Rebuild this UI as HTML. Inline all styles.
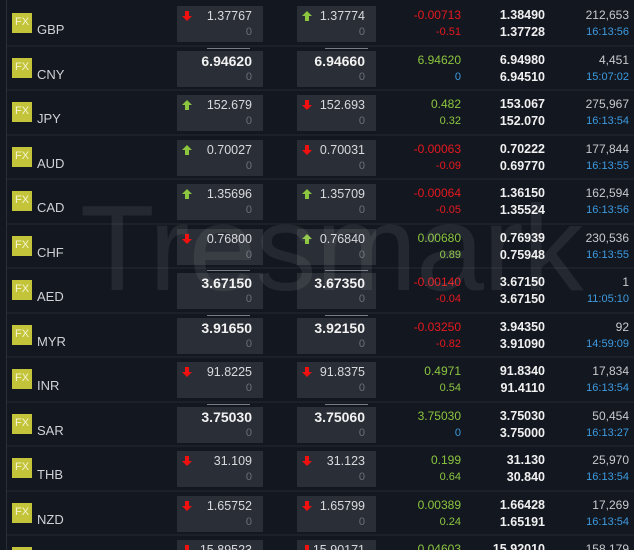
<!DOCTYPE html>
<html style="width:634px;height:550px;overflow:hidden"><head><meta charset="utf-8"><style>
*{margin:0;padding:0;box-sizing:border-box}
body{width:634px;height:550px;overflow:hidden;background:#131720;font-family:"Liberation Sans",Arial,sans-serif;position:relative}
.vl{position:absolute;left:6px;top:0;width:1px;height:550px;background:#2a2e36}
.sep{position:absolute;left:7px;width:627px;height:2px;background:#1c2029}
.row{position:absolute;left:0;width:634px;height:44px}
.fx{position:absolute;left:12px;top:12px;width:20px;height:20px;background:#c3c43a;color:#f4f4d0;font-size:11px;line-height:19px;text-align:center}
.nm{position:absolute;left:37px;top:21px;font-size:13px;color:#d0d2d6}
.box{position:absolute;top:5px;height:36px;background:#2a2e36}
.b1{left:177px;width:86px}.b2{left:297px;width:79px}
.p{position:absolute;right:11px;top:3px;font-size:12.5px;color:#d8dadd}
.p.big{font-size:14px;font-weight:bold;color:#f2f2f2;top:2px}
.z{position:absolute;right:11px;top:20px;font-size:11px;color:#6c7078}
.ar{position:absolute;left:4px;top:4px}
.tl{position:absolute;top:-3px;width:43px;height:1px;background:#777b82}
.c1,.c2,.h1,.h2,.v1,.v2{position:absolute;font-size:12px;text-align:right}
.c1,.c2{right:173px}.h1,.h2{right:89px;font-weight:bold;color:#f0f0f0;font-size:12.5px}.v1,.v2{right:5px}
.c1,.h1,.v1{top:7px}.c2,.h2,.v2{top:24px}
.c2{font-size:11px;top:25px}
.v1{color:#c8cacd}.v2{color:#3d9be0;font-size:11px;top:25px}
.r{color:#e6191e}.g{color:#8cc63f}.bl{color:#3d9be0}
.wm{position:absolute;left:80px;top:178px;font-size:122px;color:rgba(255,255,255,0.075);letter-spacing:-1px;white-space:nowrap}
</style></head><body>
<div class="vl"></div>
<div id="c"></div>
<div class="wm">Tresmark</div>
<script>
const D=[
["GBP","d","1.37767","u","1.37774","r","-0.00713","-0.51","1.38490","1.37728","212,653","16:13:56"],
["CNY","","6.94620","","6.94660","g","6.94620","0","6.94980","6.94510","4,451","15:07:02"],
["JPY","u","152.679","d","152.693","g","0.482","0.32","153.067","152.070","275,967","16:13:54"],
["AUD","u","0.70027","d","0.70031","r","-0.00063","-0.09","0.70222","0.69770","177,844","16:13:55"],
["CAD","u","1.35696","u","1.35709","r","-0.00064","-0.05","1.36150","1.35524","162,594","16:13:56"],
["CHF","d","0.76800","u","0.76840","g","0.00680","0.89","0.76939","0.75948","230,536","16:13:55"],
["AED","","3.67150","","3.67350","r","-0.00140","-0.04","3.67150","3.67150","1","11:05:10"],
["MYR","","3.91650","","3.92150","r","-0.03250","-0.82","3.94350","3.91090","92","14:59:09"],
["INR","d","91.8225","d","91.8375","g","0.4971","0.54","91.8340","91.4110","17,834","16:13:54"],
["SAR","","3.75030","","3.75060","g","3.75030","0","3.75030","3.75000","50,454","16:13:27"],
["THB","d","31.109","d","31.123","g","0.199","0.64","31.130","30.840","25,970","16:13:54"],
["NZD","d","1.65752","d","1.65799","g","0.00389","0.24","1.66428","1.65191","17,269","16:13:54"],
["MXN","d","15.89523","d","15.90171","g","0.04603","0.29","15.92010","15.80000","158,179","16:13:54"]];
const arr=t=>t=="d"?'<svg class="ar" width="12" height="12" viewBox="0 0 12 12"><path d="M6 11L1 6h3V1h4v5h3z" fill="#f01010"/></svg>':t=="u"?'<svg class="ar" width="12" height="12" viewBox="0 0 12 12"><path d="M6 1L1 6h3v5h4V6h3z" fill="#8cc63f"/></svg>':'';
let h='';
D.forEach((r,i)=>{const t=Math.round(1+i*44.5);
if(i>0)h+=`<div class="sep" style="top:${t-1}px"></div>`;
const bx=(cls,a,p,tlx)=>`<div class="box ${cls}">${a?'':`<div class="tl" style="left:${tlx}px"></div>`}${arr(a)}<div class="p ${a?'':'big'}">${p}</div><div class="z">0</div></div>`;
const c2c=r[7]=="0"?"bl":r[5];
h+=`<div class="row" style="top:${t}px"><div class="fx">FX</div><div class="nm">${r[0]}</div>${bx("b1",r[1],r[2],30)}${bx("b2",r[3],r[4],28)}<div class="c1 ${r[5]}">${r[6]}</div><div class="c2 ${c2c}">${r[7]}</div><div class="h1">${r[8]}</div><div class="h2">${r[9]}</div><div class="v1">${r[10]}</div><div class="v2">${r[11]}</div></div>`;});
document.getElementById('c').innerHTML=h;
</script>
</body></html>
